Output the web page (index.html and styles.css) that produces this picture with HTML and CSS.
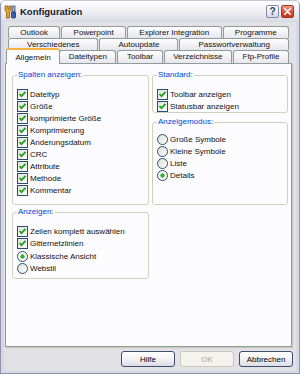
FILE: index.html
```html
<!DOCTYPE html>
<html>

<head>
  <title>Konfiguration</title>
  <link rel="stylesheet" href="styles.css">
</head>

<body>
  <div class="window">
    <div class="titlebar">
      <svg class="app-icon" viewBox="0 0 14 14">
        <path d="M2 1 L5 1 L5 4 L6 4 L6 1 L8 1 L8 5 L6.5 7 L6.5 13 L3.5 13 L3.5 7 L2 5 Z" fill="#e8a530" stroke="#8a5a10" stroke-width="0.8"/>
        <rect x="9" y="1" width="3" height="6" fill="#9db3d6" stroke="#34507e" stroke-width="0.8"/>
        <rect x="8.5" y="7" width="4" height="6" rx="1" fill="#3b5fa8" stroke="#1e3566" stroke-width="0.8"/>
      </svg>
      <span class="title">Konfiguration</span>
      <span class="tbtn help">?</span>
      <span class="tbtn close">
        <svg viewBox="0 0 12 12"><path d="M3 3 L9 9 M9 3 L3 9" stroke="#fff" stroke-width="1.8" stroke-linecap="round"/></svg>
      </span>
    </div>

    <div class="client">
      <div class="tabs">
        <div class="tab-row">
          <div class="tab">Outlook</div>
          <div class="tab">Powerpoint</div>
          <div class="tab">Explorer Integration</div>
          <div class="tab">Programme</div>
        </div>
        <div class="tab-row">
          <div class="tab">Verschiedenes</div>
          <div class="tab">Autoupdate</div>
          <div class="tab">Passwortverwaltung</div>
        </div>
        <div class="tab-row front">
          <div class="tab active">Allgemein</div>
          <div class="tab">Dateitypen</div>
          <div class="tab">Toolbar</div>
          <div class="tab">Verzeichnisse</div>
          <div class="tab">Ftp-Profile</div>
        </div>
      </div>

      <div class="panel">
        <fieldset class="group spalten">
          <legend>Spalten anzeigen:</legend>
          <label class="opt"><span class="box"><svg viewBox="0 0 9 9"><path d="M1.5 4 L3.5 6.2 L7.5 1.8"/></svg></span>Dateityp</label>
          <label class="opt"><span class="box"><svg viewBox="0 0 9 9"><path d="M1.5 4 L3.5 6.2 L7.5 1.8"/></svg></span>Größe</label>
          <label class="opt"><span class="box"><svg viewBox="0 0 9 9"><path d="M1.5 4 L3.5 6.2 L7.5 1.8"/></svg></span>komprimierte Größe</label>
          <label class="opt"><span class="box"><svg viewBox="0 0 9 9"><path d="M1.5 4 L3.5 6.2 L7.5 1.8"/></svg></span>Komprimierung</label>
          <label class="opt"><span class="box"><svg viewBox="0 0 9 9"><path d="M1.5 4 L3.5 6.2 L7.5 1.8"/></svg></span>Änderungsdatum</label>
          <label class="opt"><span class="box"><svg viewBox="0 0 9 9"><path d="M1.5 4 L3.5 6.2 L7.5 1.8"/></svg></span>CRC</label>
          <label class="opt"><span class="box"><svg viewBox="0 0 9 9"><path d="M1.5 4 L3.5 6.2 L7.5 1.8"/></svg></span>Attribute</label>
          <label class="opt"><span class="box"><svg viewBox="0 0 9 9"><path d="M1.5 4 L3.5 6.2 L7.5 1.8"/></svg></span>Methode</label>
          <label class="opt"><span class="box"><svg viewBox="0 0 9 9"><path d="M1.5 4 L3.5 6.2 L7.5 1.8"/></svg></span>Kommentar</label>
        </fieldset>

        <div class="side">
          <fieldset class="group standard">
            <legend>Standard:</legend>
            <label class="opt"><span class="box"><svg viewBox="0 0 9 9"><path d="M1.5 4 L3.5 6.2 L7.5 1.8"/></svg></span>Toolbar anzeigen</label>
            <label class="opt"><span class="box"><svg viewBox="0 0 9 9"><path d="M1.5 4 L3.5 6.2 L7.5 1.8"/></svg></span>Statusbar anzeigen</label>
          </fieldset>

          <fieldset class="group modus">
            <legend>Anzeigemodus:</legend>
            <label class="opt"><span class="radio"></span>Große Symbole</label>
            <label class="opt"><span class="radio"></span>Kleine Symbole</label>
            <label class="opt"><span class="radio"></span>Liste</label>
            <label class="opt"><span class="radio on"></span>Details</label>
          </fieldset>
        </div>

        <fieldset class="group anzeigen">
          <legend>Anzeigen:</legend>
          <label class="opt"><span class="box"><svg viewBox="0 0 9 9"><path d="M1.5 4 L3.5 6.2 L7.5 1.8"/></svg></span>Zeilen komplett auswählen</label>
          <label class="opt"><span class="box"><svg viewBox="0 0 9 9"><path d="M1.5 4 L3.5 6.2 L7.5 1.8"/></svg></span>Gitternetzlinien</label>
          <label class="opt first-radio"><span class="radio on"></span>Klassische Ansicht</label>
          <label class="opt"><span class="radio"></span>Webstil</label>
        </fieldset>
      </div>

      <div class="buttons">
        <button class="btn">Hilfe</button>
        <button class="btn" disabled>OK</button>
        <button class="btn">Abbrechen</button>
      </div>
    </div>
  </div>
</body>

</html>
```

FILE: styles.css
```css
* {
  box-sizing: border-box;
}

body {
  margin: 0;
  font-family: "Liberation Sans", Arial, sans-serif;
  font-size: 8px;
  color: #111;
  background: #fff;
}

.window {
  width: 300px;
  height: 374px;
  display: flex;
  flex-direction: column;
  background: #d6d8e4;
  border: 1px solid #8e93ad;
  border-top-color: #c4c7d6;
  border-radius: 5px 5px 0 0;
}

/* title bar */

.titlebar {
  height: 21px;
  display: flex;
  align-items: center;
  padding: 0 5px 0 2px;
  background: linear-gradient(#ffffff, #f3f3f7 40%, #e2e2ea 80%, #d6d8e4);
  border-radius: 4px 4px 0 0;
}

.app-icon {
  width: 14px;
  height: 14px;
  margin-right: 3px;
}

.title {
  flex: 1;
  font-size: 9.5px;
  font-weight: bold;
  color: #15152a;
}

.tbtn {
  width: 13px;
  height: 13px;
  margin-left: 2px;
  border-radius: 2px;
  display: flex;
  align-items: center;
  justify-content: center;
}

.help {
  border: 1px solid #7f8aa8;
  background: linear-gradient(#ffffff, #d7d9e6);
  color: #2b3a5e;
  font-size: 10px;
  font-weight: bold;
}

.close {
  border: 1px solid #9c3a2a;
  background: linear-gradient(#f29c86, #dd4a32 60%, #c8341e);
}

.close svg {
  width: 11px;
  height: 11px;
}

/* client area */

.client {
  flex: 1;
  margin: 0 3px 2px 3px;
  padding: 4px 4px 4px 1px;
  display: flex;
  flex-direction: column;
  background: #e2e1e6;
}

.tab-row {
  height: 12px;
  margin: 0 3px;
  display: flex;
  gap: 1px;
}

.tab-row.front {
  height: 13px;
}

.tab {
  flex: 1 1 auto;
  padding: 0 6px;
  line-height: 11px;
  text-align: center;
  white-space: nowrap;
  border: 1px solid #919b9c;
  border-bottom: none;
  border-radius: 3px 3px 0 0;
  background: linear-gradient(#ffffff, #f0f0f4 60%, #e6e6ee);
}

.tab.active {
  position: relative;
  z-index: 1;
  margin: -2px -2px -1px -2px;
  padding-top: 2px;
  line-height: 11px;
  border-top: 2px solid #f6b33e;
  background: #fcfcfe;
}

.panel {
  flex: 1;
  padding: 6px 4px 0 6px;
  display: grid;
  grid-template-columns: 137px 136px;
  column-gap: 3px;
  align-content: start;
  border: 1px solid #919b9c;
  background: #fcfcfe;
  box-shadow: 1px 1px 0 #c9c8c0, 2px 2px 0 #dcdbd6;
}

.side {
  display: flex;
  flex-direction: column;
}

/* group boxes */

.group {
  margin: 0;
  padding: 8px 4px 8px 4px;
  border: 1px solid #d0d0bf;
  border-radius: 3px;
}

.group legend {
  padding: 0 1px;
  line-height: 10px;
  color: #0046d5;
}

.standard {
  padding-bottom: 0;
}

.modus {
  flex: 1;
  margin-top: 4px;
  padding-top: 6px;
}

.anzeigen {
  margin-top: 2px;
  padding-bottom: 4px;
}

.opt {
  height: 12px;
  display: flex;
  align-items: center;
  gap: 2px;
  white-space: nowrap;
}

.first-radio {
  margin-top: 1px;
}

.box {
  width: 11px;
  height: 11px;
  border: 1px solid #2b4d75;
  background: linear-gradient(135deg, #e0e0da, #ffffff);
}

.box svg {
  display: block;
  width: 9px;
  height: 9px;
}

.box path {
  fill: none;
  stroke: #21a121;
  stroke-width: 1.8;
}

.radio {
  width: 11px;
  height: 11px;
  border: 1px solid #2b4d75;
  border-radius: 50%;
  background: linear-gradient(135deg, #dcdcd6, #ffffff);
}

.radio.on {
  background: radial-gradient(circle, #2fae2f 0, #2fae2f 1.8px, #e8f4e8 2.4px, #ffffff 3.2px, #e6e6e0);
}

/* dialog buttons */

.buttons {
  height: 16px;
  margin-top: 4px;
  margin-right: -1px;
  display: flex;
  justify-content: flex-end;
  gap: 5px;
}

.btn {
  width: 54px;
  height: 16px;
  padding: 0;
  font-family: inherit;
  font-size: 8px;
  color: #000;
  border: 1px solid #3d4e6e;
  border-radius: 3px;
  background: linear-gradient(#ffffff, #f2f2f6 50%, #dcdce6);
}

.btn:disabled {
  color: #aca899;
  border-color: #c9c7ba;
  background: #f4f3ee;
}
```
